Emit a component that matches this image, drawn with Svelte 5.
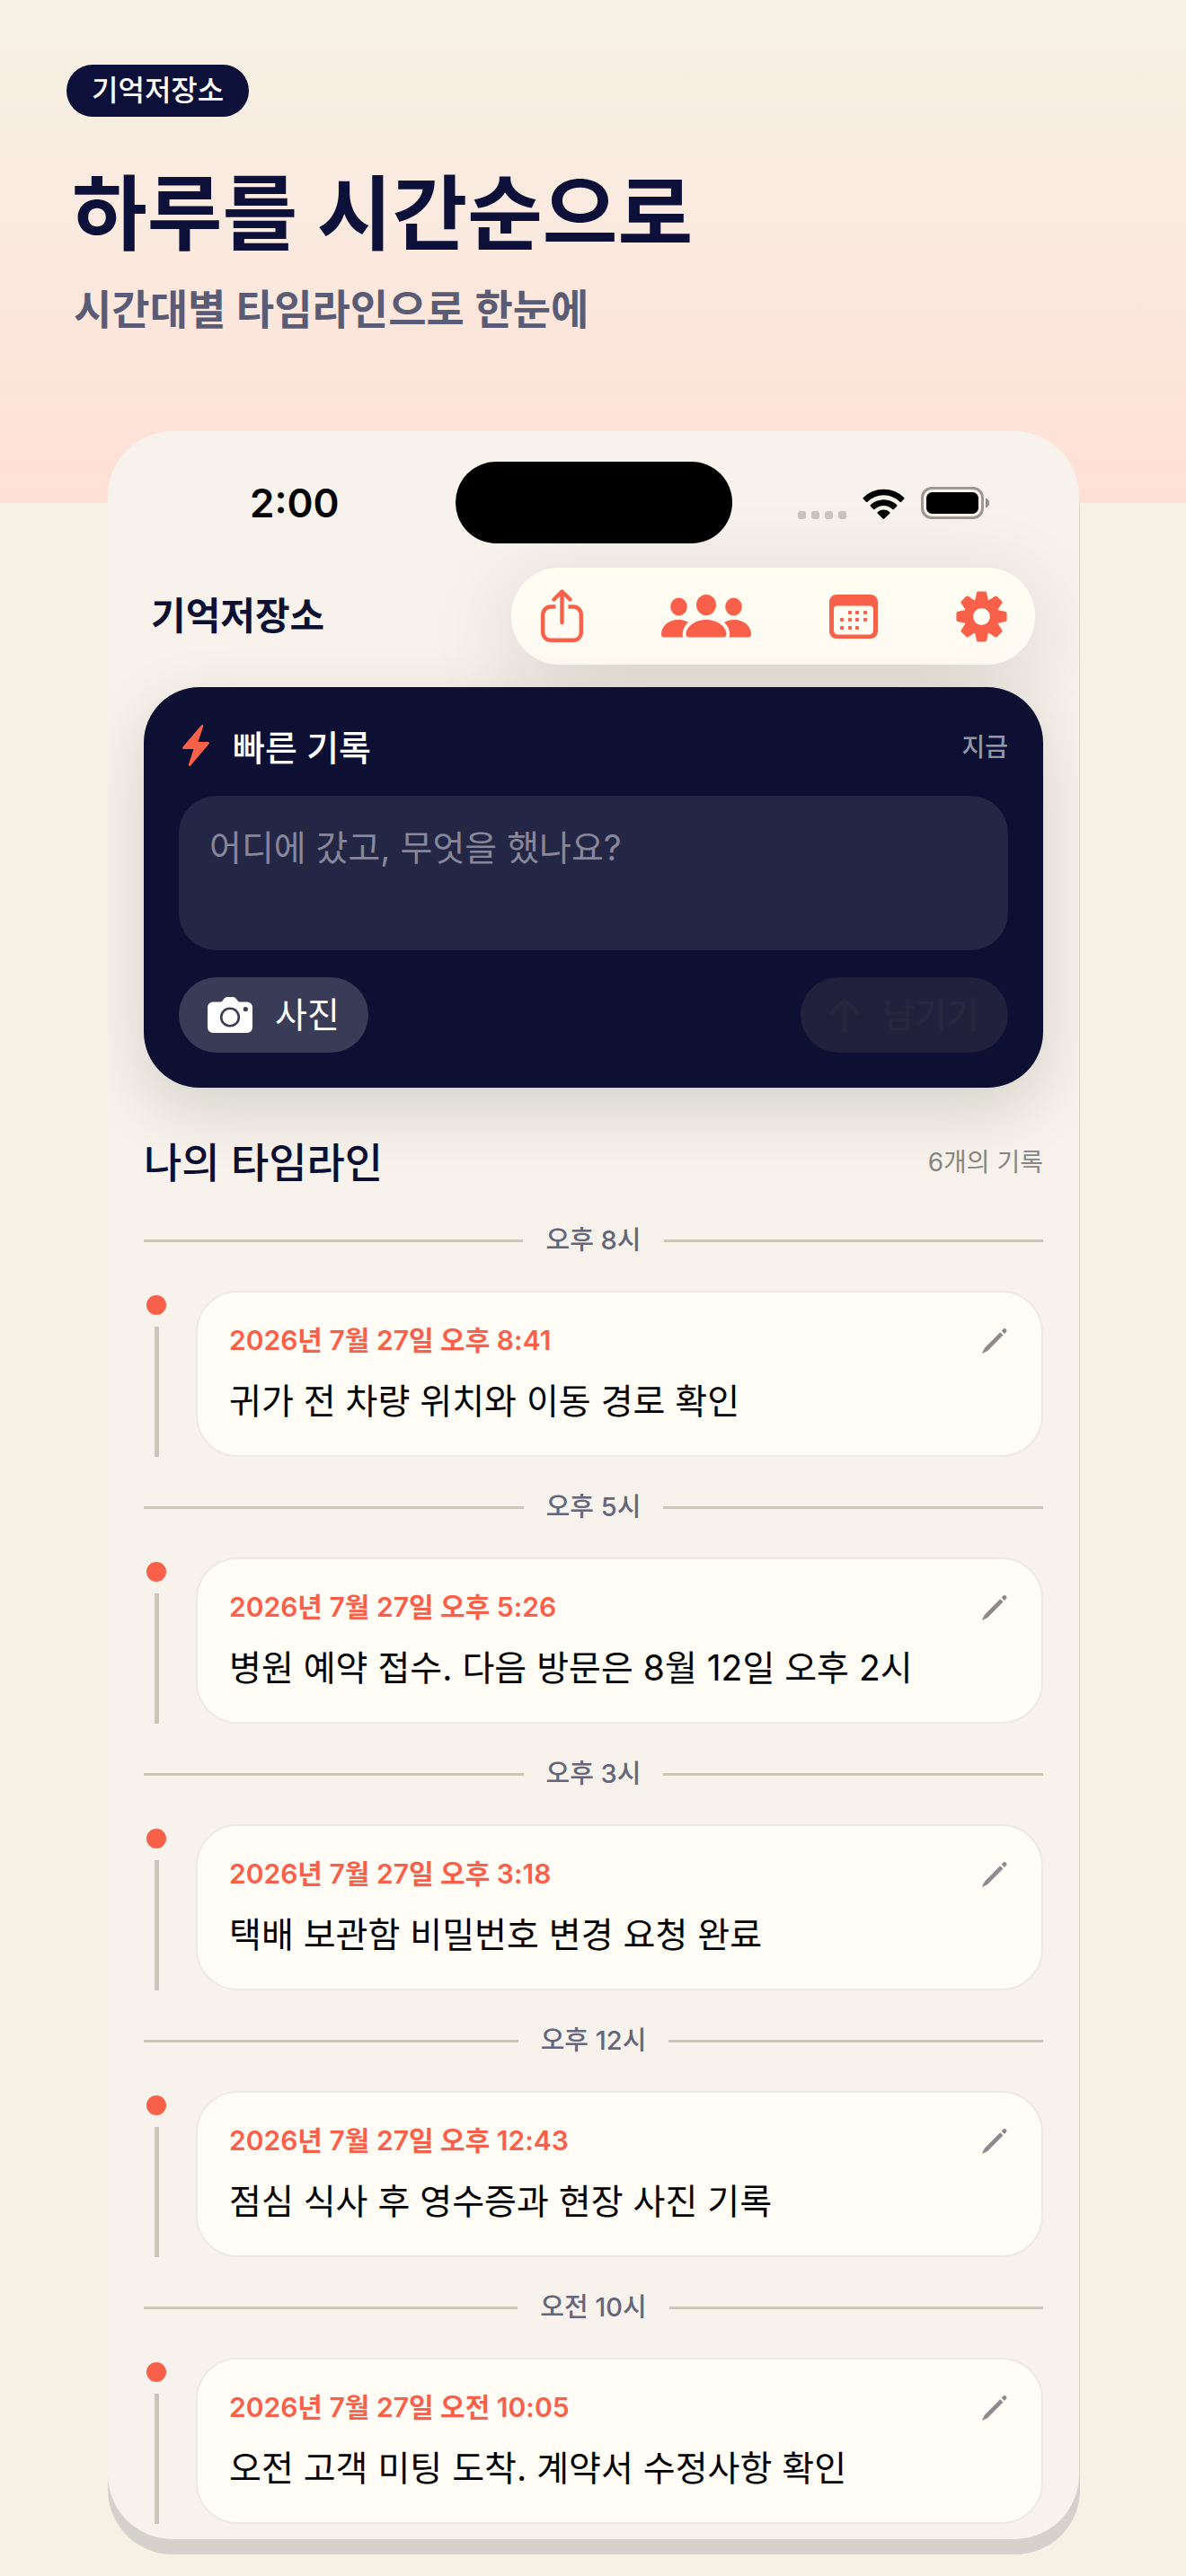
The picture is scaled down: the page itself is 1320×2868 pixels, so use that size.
<script>
  const entries = [
    { hour: '오후 8시', date: '2026년 7월 27일 오후 8:41', text: '귀가 전 차량 위치와 이동 경로 확인' },
    { hour: '오후 5시', date: '2026년 7월 27일 오후 5:26', text: '병원 예약 접수. 다음 방문은 8월 12일 오후 2시' },
    { hour: '오후 3시', date: '2026년 7월 27일 오후 3:18', text: '택배 보관함 비밀번호 변경 요청 완료' },
    { hour: '오후 12시', date: '2026년 7월 27일 오후 12:43', text: '점심 식사 후 영수증과 현장 사진 기록' },
    { hour: '오전 10시', date: '2026년 7월 27일 오전 10:05', text: '오전 고객 미팅 도착. 계약서 수정사항 확인' }
  ];
  const teeth = [0, 45, 90, 135, 180, 225, 270, 315];
  const calendarDots = [
    [21, 19], [29, 19], [38, 19],
    [12, 27], [21, 27], [29, 27], [38, 27],
    [12, 36], [21, 36], [29, 36]
  ];
  let note = $state('');
</script>

<main class="page">
  <section class="hero">
    <span class="badge">기억저장소</span>
    <h1>하루를 시간순으로</h1>
    <p class="tagline">시간대별 타임라인으로 한눈에</p>
  </section>

  <section class="phone">
    <div class="status">
      <span class="clock">2:00</span>
      <span class="island"></span>
      <div class="signals">
        <svg class="cell" width="54" height="9" viewBox="0 0 54 9" aria-hidden="true">
          <rect x="0" width="9" height="9" rx="3" /><rect x="15" width="9" height="9" rx="3" />
          <rect x="30" width="9" height="9" rx="3" /><rect x="45" width="9" height="9" rx="3" />
        </svg>
        <svg width="47" height="34" viewBox="0 0 47 34" aria-hidden="true">
          <path d="M.8 10.1a32 32 0 0 1 45.4 0c.5.5.5 1 0 1.500l-3.100 3.100c-.5.5-1.100.5-1.600 0a25.600 25.600 0 0 0-36 0c-.5.5-1.100.5-1.600 0L.8 11.600c-.5-.5-.5-1 0-1.500z" />
          <path d="M8.900 18.100a21 21 0 0 1 29.200 0c.5.5.5 1.100 0 1.600l-3.200 3.200c-.5.5-1.100.5-1.600 0a14.300 14.300 0 0 0-19.600 0c-.5.5-1.100.5-1.600 0l-3.200-3.200c-.5-.5-.5-1.100 0-1.600z" />
          <path d="M16.900 26.100a10 10 0 0 1 13.200 0c.6.5.6 1.100.1 1.600l-5.900 5.900c-.5.5-1.100.5-1.600 0l-5.900-5.900c-.5-.5-.5-1.100.1-1.600z" />
        </svg>
        <svg width="76" height="36" viewBox="0 0 76 36" aria-hidden="true">
          <rect x="1.500" y="1.500" width="67" height="33" rx="10.500" fill="none" stroke="#9b9993" stroke-width="3" />
          <rect x="6" y="6" width="58" height="24" rx="6.500" />
          <path d="M72 12.500c2.600 1 4 3 4 5.500s-1.400 4.500-4 5.500z" fill="#8f8d88" />
        </svg>
      </div>
    </div>

    <header class="topbar">
      <h2 class="app-name">기억저장소</h2>
      <nav class="toolbar" aria-label="도구">
        <button type="button" aria-label="공유">
          <svg width="47" height="60" viewBox="0 0 47 60" fill="none" stroke="currentColor" stroke-width="4.400" stroke-linecap="round" stroke-linejoin="round">
            <path d="M23.500 37V3M14.500 11.500l9-9 9 9" />
            <path d="M16.500 19.500H11a8.800 8.800 0 0 0-8.800 8.800V48a8.800 8.800 0 0 0 8.800 8.800h25a8.800 8.800 0 0 0 8.800-8.800V28.300a8.800 8.800 0 0 0-8.800-8.800h-5.500" stroke-linecap="butt" />
          </svg>
        </button>
        <button type="button" aria-label="구성원">
          <svg width="100" height="48" viewBox="0 0 100 48" fill="currentColor">
            <ellipse cx="19.500" cy="13.500" rx="9.300" ry="10" />
            <ellipse cx="80.500" cy="13.500" rx="9.300" ry="10" />
            <ellipse cx="50" cy="11.500" rx="11" ry="11.500" />
            <path d="M3 47.500c-2 0-3-1.500-3-3.500 0-8 7-16 19-16 4.300 0 8 1 11 3-4.500 4-6.500 9-6.200 14 0 1 .3 1.800.7 2.500z" />
            <path d="M97 47.500c2 0 3-1.500 3-3.500 0-8-7-16-19-16-4.300 0-8 1-11 3 4.500 4 6.500 9 6.200 14 0 1-.3 1.800-.7 2.500z" />
            <path d="M31.500 47.500c-2.600 0-4-1.400-4-3.500C27.500 37 36 28 50 28s22.500 9 22.500 16c0 2.100-1.400 3.500-4 3.500z" />
          </svg>
        </button>
        <button type="button" aria-label="달력">
          <svg width="54" height="49" viewBox="0 0 54 49" fill="currentColor">
            <path fill-rule="evenodd" d="M8 0h38a8 8 0 0 1 8 8v33a8 8 0 0 1-8 8H8a8 8 0 0 1-8-8V8a8 8 0 0 1 8-8zM9 12.500a4 4 0 0 0-4 4V40a4.500 4.500 0 0 0 4.500 4.500h35A4.500 4.500 0 0 0 49 40V16.500a4 4 0 0 0-4-4z" />
            {#each calendarDots as [x, y]}
              <rect {x} y={y - 1} width="4" height="4" rx="1" />
            {/each}
          </svg>
        </button>
        <button type="button" aria-label="설정">
          <svg width="57" height="57" viewBox="-28.500 -28.500 57 57" fill="currentColor">
            <circle r="14.600" fill="none" stroke="currentColor" stroke-width="10.400" />
            {#each teeth as angle}
              <path d="M-5.800-17L-3.800-26.300H3.800L5.800-17z" stroke="currentColor" stroke-width="3.500" stroke-linejoin="round" transform="rotate({angle})" />
            {/each}
          </svg>
        </button>
      </nav>
    </header>

    <form class="quick" onsubmit={(e) => e.preventDefault()}>
      <div class="quick-head">
        <svg width="30" height="46" viewBox="0 0 30 46" fill="#f8604a" aria-hidden="true">
          <path d="M20.800.7c1.200-1.300 2.900-.4 2.300 1.400L17.500 18.900h10.700c1.600 0 2.200 1.300 1.200 2.600L9.200 45.300c-1.200 1.300-2.900.4-2.300-1.400l5.600-16.800H1.800c-1.600 0-2.200-1.300-1.200-2.600z" />
        </svg>
        <label for="note">빠른 기록</label>
        <span class="now">지금</span>
      </div>
      <textarea id="note" placeholder="어디에 갔고, 무엇을 했나요?" bind:value={note}></textarea>
      <div class="quick-actions">
        <button class="pill photo" type="button">
          <svg width="50" height="40" viewBox="0 0 50 40" aria-hidden="true">
            <path fill="#fff" d="M6 5.500h8.500c.8 0 1.400-.4 1.900-1l2.100-2.700C19.500.5 20.700 0 22.300 0h5.600c1.600 0 2.800.5 3.800 1.800l2.100 2.700c.5.6 1.100 1 1.900 1H44a6 6 0 0 1 6 6V34a6 6 0 0 1-6 6H6a6 6 0 0 1-6-6V11.500a6 6 0 0 1 6-6z" />
            <circle cx="25" cy="22.500" r="9.800" fill="none" stroke="#3a3b57" stroke-width="2.600" />
            <circle cx="42.300" cy="13.500" r="2.600" fill="#3a3b57" />
          </svg>
          사진
        </button>
        <button class="pill save" type="submit" disabled>
          <svg width="34" height="40" viewBox="0 0 34 40" fill="none" stroke="currentColor" stroke-width="5" stroke-linecap="round" stroke-linejoin="round" aria-hidden="true">
            <path d="M17 37V3.500M3 17.500l14-14 14 14" />
          </svg>
          남기기
        </button>
      </div>
    </form>

    <div class="section-head">
      <h3>나의 타임라인</h3>
      <span>6개의 기록</span>
    </div>

    <ol class="timeline">
      {#each entries as entry}
        <li>
          <div class="divider">{entry.hour}</div>
          <div class="entry">
            <div class="marker"></div>
            <article class="card">
              <div class="card-head">
                <time>{entry.date}</time>
                <button type="button" aria-label="편집">
                  <svg width="28" height="29" viewBox="0 0 28 29" fill="currentColor">
                    <path d="M20.200 5.200l3.300 3.300L6.200 26 1.300 28.600c-.7.300-1.200-.2-.9-.9l2.500-5z" />
                    <path d="M21.700 3.700l2-2.200c1.800-1.800 5 1.500 3.300 3.300l-2 2.200z" />
                  </svg>
                </button>
              </div>
              <p>{entry.text}</p>
            </article>
          </div>
        </li>
      {/each}
    </ol>
  </section>
</main>

<style>
  :global(body) {
    margin: 0;
    background: #f6f1e5;
  }
  .page {
    box-sizing: border-box;
    padding: 72px 119px 41px 120px;
    background: linear-gradient(#f6f1e5, #fbe9de 50%, #ffe0d5) top / 100% 560px no-repeat #f6f1e5;
    font-family: Inter, 'Noto Sans CJK KR', sans-serif;
    color: #0e1033;
  }
  h1, h2, h3, p, ol {
    margin: 0;
    padding: 0;
  }
  button, textarea {
    font: inherit;
    border: 0;
    padding: 0;
    margin: 0;
  }
  button {
    background: none;
    cursor: pointer;
  }
  svg {
    display: block;
    flex: none;
  }
  .hero {
    display: flex;
    flex-direction: column;
    align-items: flex-start;
    height: 408px;
    margin-left: -46px;
    color: #0d1038;
  }
  .badge {
    padding: 0 28px;
    border-radius: 30px;
    background: #0d1038;
    color: #fff;
    font-size: 32px;
    font-weight: 500;
    line-height: 58px;
  }
  h1 {
    margin: 50px 0 0 6px;
    font-size: 91px;
    font-weight: 700;
    line-height: 116px;
  }
  .tagline {
    margin: 16px 0 0 8px;
    color: #5a5c75;
    font-size: 46px;
    font-weight: 600;
    line-height: 64px;
  }
  .phone {
    overflow: hidden;
    padding: 34px 40px 17px;
    border-radius: 72px;
    background: #f7f2eb;
    box-shadow: 0 17px 0 #d5d1cd, 1px 17px 0 #d5d1cd;
  }
  .status {
    display: grid;
    grid-template-columns: 1fr 308px 1fr;
    align-items: center;
  }
  .clock {
    padding-left: 118px;
    color: #000;
    font-size: 44px;
    font-weight: 600;
  }
  .island {
    height: 91px;
    border-radius: 46px;
    background: #000;
  }
  .signals {
    display: flex;
    justify-content: flex-end;
    align-items: flex-end;
    gap: 18px;
    padding-right: 60px;
  }
  .cell {
    fill: #c8c4be;
  }
  .topbar {
    display: flex;
    justify-content: space-between;
    align-items: center;
    margin-top: 27px;
    padding: 0 9px 0 8px;
  }
  .app-name {
    font-size: 42px;
    font-weight: 600;
    line-height: 56px;
  }
  .toolbar {
    display: flex;
    align-items: center;
    gap: 87px;
    height: 108px;
    padding: 0 31px 0 33px;
    border-radius: 54px;
    background: linear-gradient(#fffef2, #fffaf2);
    box-shadow: 0 24px 100px rgba(20, 24, 10, 0.14);
  }
  .toolbar button {
    color: #f8604a;
  }
  .quick {
    position: relative;
    display: flex;
    flex-direction: column;
    gap: 30px;
    margin-top: 25px;
    padding: 39px;
    border-radius: 62px;
    background: #0e1033;
    box-shadow: 0 24px 72px rgba(20, 24, 20, 0.15);
  }
  .quick-head {
    display: flex;
    align-items: center;
    height: 52px;
    padding-left: 4px;
    color: #fff;
    font-size: 39px;
    font-weight: 500;
  }
  .quick-head label {
    margin-left: 26px;
  }
  .now {
    margin-left: auto;
    color: #9496a6;
    font-size: 28px;
    font-weight: 500;
  }
  textarea {
    box-sizing: border-box;
    display: block;
    width: 100%;
    height: 172px;
    padding: 32px 34px;
    border-radius: 42px;
    background: #242645;
    color: #fff;
    font-size: 39px;
    line-height: 52px;
    resize: none;
    outline: 0;
  }
  textarea::placeholder {
    color: #86879a;
    opacity: 1;
  }
  .quick-actions {
    display: flex;
    justify-content: space-between;
  }
  .pill {
    display: flex;
    align-items: center;
    gap: 25px;
    height: 84px;
    padding: 0 32px;
    border-radius: 42px;
    font-size: 39px;
    line-height: 52px;
  }
  .photo {
    background: #3a3b57;
    color: #fff;
  }
  .save {
    background: #21213d;
    color: #26273e;
    font-weight: 500;
  }
  .section-head {
    display: flex;
    justify-content: space-between;
    align-items: center;
    margin-top: 55px;
  }
  h3 {
    font-size: 46px;
    font-weight: 500;
    line-height: 56px;
  }
  .section-head span {
    color: #868686;
    font-size: 28px;
    line-height: 36px;
  }
  .timeline {
    display: flex;
    flex-direction: column;
    gap: 38px;
    margin-top: 41px;
    list-style: none;
  }
  .divider {
    display: flex;
    align-items: center;
    gap: 25px;
    margin-bottom: 38px;
    color: #65667b;
    font-size: 29px;
    font-weight: 500;
    line-height: 36px;
  }
  .divider::before,
  .divider::after {
    content: '';
    flex: 1;
    height: 3px;
    background: #cbc6b8;
  }
  .entry {
    display: flex;
    gap: 30px;
  }
  .marker {
    display: flex;
    flex-direction: column;
    align-items: center;
    gap: 13px;
    width: 28px;
    padding-top: 5px;
  }
  .marker::before {
    content: '';
    width: 22px;
    height: 22px;
    border-radius: 50%;
    background: #f8604a;
  }
  .marker::after {
    content: '';
    flex: 1;
    width: 5px;
    background: #cac5b8;
  }
  .card {
    flex: 1;
    padding: 35px 38px 35px 35px;
    border: 2px solid #edeae3;
    border-radius: 46px;
    background: #fffdf6;
  }
  .card-head {
    display: flex;
    justify-content: space-between;
    align-items: center;
    height: 36px;
    margin-bottom: 25px;
  }
  time {
    color: #f8604a;
    font-size: 30px;
    font-weight: 600;
    line-height: 36px;
  }
  .card-head button {
    color: #8b8b8d;
  }
  .card p {
    color: #000;
    font-size: 39px;
    line-height: 50px;
  }
</style>
